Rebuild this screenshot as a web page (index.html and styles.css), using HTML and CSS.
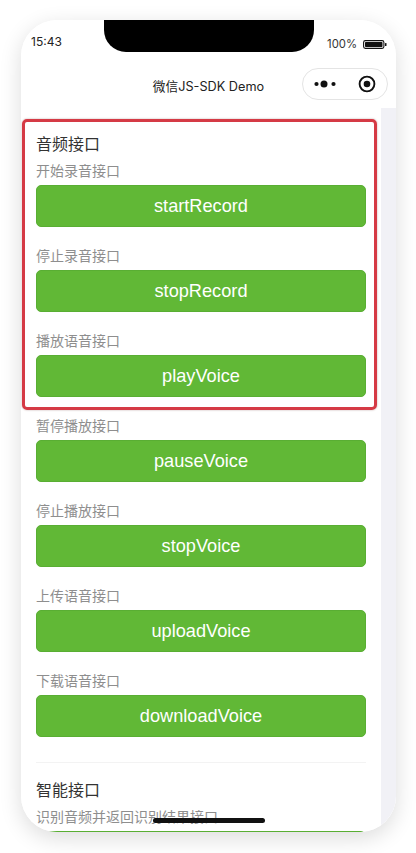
FILE: index.html
```html
<!DOCTYPE html>
<html lang="zh">
<head>
<meta charset="utf-8">
<title>微信JS-SDK Demo</title>
<link rel="stylesheet" href="styles.css">
</head>
<body>
<div class="phone">
  <div class="notch"></div>
  <header class="status">
    <span class="time">15:43</span>
    <div class="status-right">
      <span class="pct">100%</span>
      <svg class="battery" width="24" height="9" viewBox="0 0 24 9"><rect x="0.6" y="0.6" width="20.3" height="7.8" rx="1.8" fill="none" stroke="#111" stroke-width="1.1"/><rect x="2" y="2" width="17.5" height="5" rx="0.8" fill="#111"/><rect x="22" y="3" width="1.5" height="3" rx="0.6" fill="#111"/></svg>
    </div>
  </header>
  <nav class="nav">
    <span class="nav-title">微信JS-SDK Demo</span>
    <div class="capsule">
      <svg width="24" height="8" viewBox="0 0 24 8"><circle cx="2.5" cy="4" r="2.1" fill="#111"/><circle cx="10" cy="4" r="3.5" fill="#111"/><circle cx="19.5" cy="4" r="2.1" fill="#111"/></svg>
      <svg width="18" height="18" viewBox="0 0 18 18"><circle cx="9" cy="9" r="7.4" fill="none" stroke="#111" stroke-width="1.9"/><circle cx="9" cy="9" r="3.3" fill="#111"/></svg>
    </div>
  </nav>
  <div class="body">
    <main class="content">
      <section class="group first">
        <h2 class="group-title">音频接口</h2>
        <div class="item"><p class="label">开始录音接口</p><button class="btn">startRecord</button></div>
        <div class="item"><p class="label">停止录音接口</p><button class="btn">stopRecord</button></div>
        <div class="item"><p class="label">播放语音接口</p><button class="btn">playVoice</button></div>
        <div class="item"><p class="label">暂停播放接口</p><button class="btn">pauseVoice</button></div>
        <div class="item"><p class="label">停止播放接口</p><button class="btn">stopVoice</button></div>
        <div class="item"><p class="label">上传语音接口</p><button class="btn">uploadVoice</button></div>
        <div class="item"><p class="label">下载语音接口</p><button class="btn">downloadVoice</button></div>
      </section>
      <section class="group second">
        <h2 class="group-title">智能接口</h2>
        <div class="item"><p class="label">识别音频并返回识别结果接口</p><button class="btn"></button></div>
      </section>
    </main>
    <div class="gutter"></div>
  </div>
  <div class="highlight"></div>
  <div class="home-bar"></div>
</div>
</body>
</html>
```
FILE: styles.css
```css
* { box-sizing: border-box; }
html, body { margin: 0; height: 853px; overflow: hidden; background: #fff; }
body { padding: 20px 20px 21px 21px; font-family: "Liberation Sans", "Noto Sans CJK SC", sans-serif; }
.phone {
  position: relative;
  width: 375px;
  height: 812px;
  display: flex;
  flex-direction: column;
  background: #fff;
  border-radius: 36px;
  overflow: hidden;
}
body::before {
  content: "";
  position: absolute;
  left: 21px;
  top: 20px;
  width: 375px;
  height: 812px;
  border-radius: 36px;
  box-shadow: 0 6px 22px rgba(0, 0, 0, .14);
}
.notch {
  position: absolute;
  left: 83px;
  top: 0;
  width: 210px;
  height: 32px;
  background: #000;
  border-radius: 0 0 22px 22px;
}
.status {
  height: 44px;
  flex: none;
  display: flex;
  justify-content: space-between;
  padding: 15px 9px 0 10px;
  font-family: "Inter", "Noto Sans CJK SC", sans-serif;
  font-size: 12px;
  color: #222;
}
.time { line-height: 14px; }
.status-right { display: flex; align-items: center; gap: 6px; height: 14px; margin-top: 2px; }
.pct { color: #333; font-size: 11.3px; }
.battery { display: block; }
.nav {
  position: relative;
  height: 44px;
  flex: none;
  display: flex;
  align-items: center;
  justify-content: center;
}
.nav-title {
  font-family: "Inter", "Noto Sans CJK SC", sans-serif;
  font-size: 12.7px;
  color: #222;
  margin-top: -2px;
}
.capsule {
  position: absolute;
  right: 8px;
  top: 4px;
  width: 86px;
  height: 32px;
  border: 1px solid #e4e4e4;
  border-radius: 16px;
  display: flex;
  align-items: center;
  justify-content: space-between;
  padding: 0 11px;
  background: #fff;
}
.body { flex: 1; display: flex; min-height: 0; }
.content { width: 360px; padding: 0 15px; overflow: hidden; }
.gutter { width: 15px; background: #f1f1f6; }
.group.first { padding: 24px 0 25px; border-bottom: 1px solid #f3f3f3; }
.group.second { padding-top: 15px; }
.group-title {
  margin: 0;
  font-size: 16px;
  font-weight: 400;
  line-height: 25px;
  color: #333;
}
.item + .item { margin-top: 15px; }
.label { margin: 0; height: 28px; font-size: 14px; line-height: 28px; color: #8e8e8e; }
.btn {
  display: block;
  width: 100%;
  height: 42px;
  padding: 0;
  border: 1px solid #59ae33;
  border-radius: 5px;
  background: #61b836;
  color: #fff;
  font-family: "Liberation Sans", sans-serif;
  font-size: 18.2px;
}
.highlight {
  position: absolute;
  left: 1px;
  top: 99px;
  width: 355px;
  height: 291px;
  border: 3px solid #d53a45;
  border-radius: 5px;
  box-shadow: 0 0 2px rgba(90, 20, 20, .4);
}
.home-bar {
  position: absolute;
  left: 132px;
  top: 798px;
  width: 112px;
  height: 5px;
  border-radius: 3px;
  background: #111;
}
```
